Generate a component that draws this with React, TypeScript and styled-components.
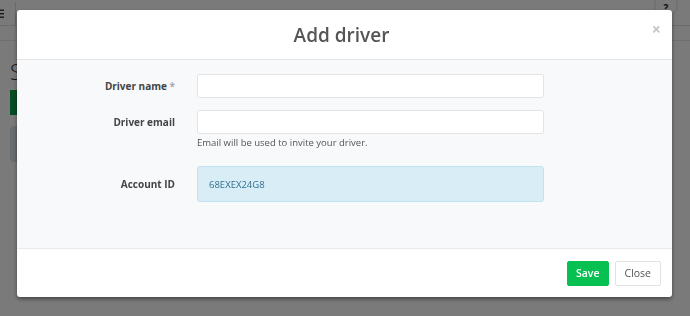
import React from "react";
import styled, {createGlobalStyle} from "styled-components";

const GlobalStyle = createGlobalStyle`
    html, body {
        margin: 0;
        padding: 0;
        width: 690px;
        height: 316px;
        overflow: hidden;
        font-family: "Open Sans", "Liberation Sans", sans-serif;
    }
`;

export default function App() {
    return (
        <>
            <GlobalStyle/>
            <Page>
                <TopBar>
                    <MenuGlyph width="4" height="10" viewBox="0 0 4 10">
                        <rect x="0" y="1" width="4" height="1.4" fill="#333"/>
                        <rect x="0" y="4.5" width="4" height="1.4" fill="#333"/>
                        <rect x="0" y="8" width="4" height="1.4" fill="#333"/>
                    </MenuGlyph>
                    <HelpCircle>?</HelpCircle>
                </TopBar>
                <SubBar/>
                <PageBody>
                    <PageTitle>S</PageTitle>
                    <GreenButton/>
                    <InfoPanel/>
                </PageBody>
            </Page>
            <Overlay>
                <Modal>
                    <ModalHeader>
                        <ModalTitle>Add driver</ModalTitle>
                        <CloseX>×</CloseX>
                    </ModalHeader>
                    <ModalBody>
                        <FormRow>
                            <Label>Driver name <Star>*</Star></Label>
                            <Input type="text"/>
                        </FormRow>
                        <FormRow>
                            <Label>Driver email</Label>
                            <Field>
                                <Input type="text"/>
                                <Help>Email will be used to invite your driver.</Help>
                            </Field>
                        </FormRow>
                        <FormRow>
                            <Label>Account ID</Label>
                            <InfoBox>68EXEX24G8</InfoBox>
                        </FormRow>
                    </ModalBody>
                    <ModalFooter>
                        <Button variant="primary">Save</Button>
                        <Button variant="default">Close</Button>
                    </ModalFooter>
                </Modal>
            </Overlay>
        </>
    );
}

const Page = styled.div`
    width: 690px;
    height: 316px;
    background: #fff;
`;

const TopBar = styled.div`
    height: 25px;
    border-bottom: 1px solid #e2e2e2;
    display: flex;
    justify-content: space-between;
    align-items: flex-start;
`;

const MenuGlyph = styled.svg`
    margin-top: 2px;
    padding-right: 11px;
    border-right: 1px solid #ddd;
    height: 23px;
    box-sizing: content-box;
`;

const HelpCircle = styled.span`
    width: 24px;
    height: 24px;
    margin-top: -7px;
    margin-right: 12px;
    border: 1px solid #ddd;
    border-radius: 50%;
    display: flex;
    align-items: center;
    justify-content: center;
    padding-top: 6px;
    font-size: 10px;
    line-height: 10px;
    font-weight: 700;
    color: #222;
    box-sizing: border-box;
`;

const SubBar = styled.div`
    height: 14px;
    border-bottom: 1px solid #e8e8e8;
`;

const PageBody = styled.div`
    padding: 22px 0 0 10px;
    display: flex;
    flex-direction: column;
    gap: 11px;
`;

const PageTitle = styled.div`
    font-size: 22px;
    font-weight: 300;
    color: #333;
    line-height: 16px;
`;

const GreenButton = styled.div`
    width: 60px;
    height: 25px;
    background: #0ca14a;
`;

const InfoPanel = styled.div`
    width: 300px;
    height: 36px;
    border-radius: 4px;
    background: #d9e4ea;
`;

const Overlay = styled.div`
    position: fixed;
    inset: 0;
    background: rgba(0, 0, 0, 0.52);
    padding: 10px 0 0 17px;
`;

const Modal = styled.div`
    width: 655px;
    height: 287px;
    background: #fff;
    border-radius: 3px;
    box-shadow: 0 2px 4px rgba(0, 0, 0, 0.45);
    display: flex;
    flex-direction: column;
    overflow: hidden;
`;

const ModalHeader = styled.div`
    height: 49px;
    border-bottom: 1px solid #e5e5e5;
    display: flex;
    align-items: center;
    justify-content: center;
    position: relative;
`;

const ModalTitle = styled.h4`
    margin: 0;
    font-size: 19px;
    font-weight: 600;
    color: #555;
    transform: translateX(-3px);
`;

const CloseX = styled.span`
    position: absolute;
    right: 11px;
    top: 8px;
    font-size: 16px;
    color: #c6c6c6;
    font-weight: 700;
`;

const ModalBody = styled.div`
    height: 189px;
    box-sizing: border-box;
    background: #f8f9fb;
    border-bottom: 1px solid #e8eaed;
    padding-top: 14px;
    display: flex;
    flex-direction: column;
    gap: 12px;
`;

const FormRow = styled.div`
    display: grid;
    grid-template-columns: 158px 347px;
    column-gap: 22px;
    align-items: start;
    &:last-child {
        margin-top: 5px;
        align-items: center;
    }
`;

const Label = styled.label`
    text-align: right;
    font-size: 10px;
    font-weight: 700;
    color: #444;
    line-height: 24px;
`;

const Star = styled.span`
    color: #aaa;
`;

const Field = styled.div`
    display: flex;
    flex-direction: column;
`;

const Input = styled.input`
    box-sizing: border-box;
    width: 347px;
    height: 24px;
    border: 1px solid #e4e4e4;
    border-radius: 2px;
    background: #fff;
    margin: 0;
    outline: none;
`;

const Help = styled.div`
    font-size: 9.5px;
    color: #555;
    line-height: 13px;
    margin-top: 2px;
`;

const InfoBox = styled.div`
    box-sizing: border-box;
    height: 36px;
    border: 1px solid #bfe3ef;
    border-radius: 3px;
    background: #d9edf7;
    color: #31708f;
    font-size: 9.5px;
    display: flex;
    align-items: center;
    padding-left: 11px;
`;

const ModalFooter = styled.div`
    flex: 1;
    display: flex;
    justify-content: flex-end;
    align-items: center;
    gap: 6px;
    padding: 0 11px 0 0;
`;

const Button = styled.button<{ variant: "primary" | "default" }>`
    height: 25px;
    font-family: "Open Sans", "Liberation Sans", sans-serif;
    font-size: 10.5px;
    padding: 0 ${props => props.variant === "primary" ? "8px" : "9px"};
    border-radius: 2px;
    border: 1px solid ${props => props.variant === "primary" ? "#06c152" : "#e2e2e2"};
    background: ${props => props.variant === "primary" ? "#06c152" : "#fff"};
    color: ${props => props.variant === "primary" ? "#fff" : "#555"};
    font-weight: ${props => props.variant === "primary" ? 600 : 400};
`;
